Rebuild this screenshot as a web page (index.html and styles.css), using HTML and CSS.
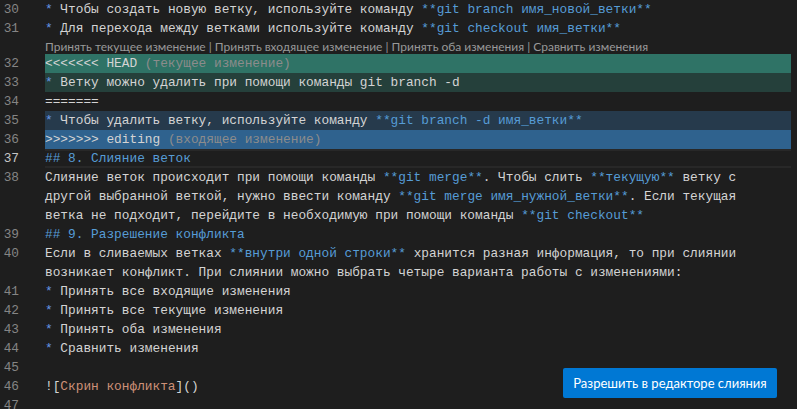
FILE: index.html
```html
<!DOCTYPE html>
<html lang="ru">
<head>
<meta charset="utf-8">
<title>merge conflict</title>
<link rel="stylesheet" href="styles.css">
</head>
<body>
<div class="editor">
  <div class="row"><span class="ln">30</span><span class="code"><span class="bul">*</span> Чтобы создать новую ветку, используйте команду <span class="md">**git branch имя_новой_ветки**</span></span></div>
  <div class="row"><span class="ln">31</span><span class="code"><span class="bul">*</span> Для перехода между ветками используйте команду <span class="md">**git checkout имя_ветки**</span></span></div>
  <div class="lens">Принять текущее изменение | Принять входящее изменение | Принять оба изменения | Сравнить изменения</div>
  <div class="row"><span class="ln">32</span><span class="code cur-head">&lt;&lt;&lt;&lt;&lt;&lt;&lt; HEAD<span class="hint"> (текущее изменение)</span></span></div>
  <div class="row"><span class="ln">33</span><span class="code cur-body"><span class="bul">*</span> Ветку можно удалить при помощи команды git branch -d</span></div>
  <div class="row"><span class="ln">34</span><span class="code">=======</span></div>
  <div class="row"><span class="ln">35</span><span class="code inc-body"><span class="bul">*</span> Чтобы удалить ветку, используйте команду <span class="md">**git branch -d имя_ветки**</span></span></div>
  <div class="row"><span class="ln">36</span><span class="code inc-head">&gt;&gt;&gt;&gt;&gt;&gt;&gt; editing<span class="hint"> (входящее изменение)</span></span></div>
  <div class="row active"><span class="ln">37</span><span class="code"><span class="hd">## 8. Слияние веток</span></span></div>
  <div class="row"><span class="ln">38</span><span class="code">Слияние веток происходит при помощи команды <span class="md">**git merge**</span>. Чтобы слить <span class="md">**текущую**</span> ветку с</span></div>
  <div class="row"><span class="ln"></span><span class="code">другой выбранной веткой, нужно ввести команду <span class="md">**git merge имя_нужной_ветки**</span>. Если текущая</span></div>
  <div class="row"><span class="ln"></span><span class="code">ветка не подходит, перейдите в необходимую при помощи команды <span class="md">**git checkout**</span></span></div>
  <div class="row"><span class="ln">39</span><span class="code"><span class="hd">## 9. Разрешение конфликта</span></span></div>
  <div class="row"><span class="ln">40</span><span class="code">Если в сливаемых ветках <span class="md">**внутри одной строки**</span> хранится разная информация, то при слиянии</span></div>
  <div class="row"><span class="ln"></span><span class="code">возникает конфликт. При слиянии можно выбрать четыре варианта работы с изменениями:</span></div>
  <div class="row"><span class="ln">41</span><span class="code"><span class="bul">*</span> Принять все входящие изменения</span></div>
  <div class="row"><span class="ln">42</span><span class="code"><span class="bul">*</span> Принять все текущие изменения</span></div>
  <div class="row"><span class="ln">43</span><span class="code"><span class="bul">*</span> Принять оба изменения</span></div>
  <div class="row"><span class="ln">44</span><span class="code"><span class="bul">*</span> Сравнить изменения</span></div>
  <div class="row"><span class="ln">45</span><span class="code"></span></div>
  <div class="row"><span class="ln">46</span><span class="code">![<span class="str">Скрин конфликта</span>]()</span></div>
  <div class="row"><span class="ln">47</span><span class="code"></span></div>
</div>
<button class="merge-btn" type="button">Разрешить в редакторе слияния</button>
</body>
</html>
```

FILE: styles.css
```css
html, body {
  margin: 0;
  padding: 0;
  background: #1e1e1e;
  width: 797px;
  height: 409px;
  overflow: hidden;
}

body {
  position: relative;
  font-family: "Liberation Mono", "DejaVu Sans Mono", monospace;
  font-size: 12.8px;
  color: #d4d4d4;
}

.editor {
  display: flex;
  flex-direction: column;
}

.row {
  display: flex;
  height: 19px;
  line-height: 19px;
}

.ln {
  flex: none;
  width: 19px;
  text-align: right;
  color: #858585;
}

.code {
  flex: none;
  margin-left: 26px;
  width: 746px;
  white-space: pre;
  box-sizing: border-box;
}

.active .ln {
  color: #c6c6c6;
}

.active .code {
  border-top: 2px solid #282828;
  border-bottom: 2px solid #282828;
  line-height: 15px;
}

.lens {
  height: 16px;
  line-height: 17px;
  margin-left: 45px;
  font-family: Lato, "Open Sans", sans-serif;
  font-size: 12px;
  color: #999999;
  white-space: pre;
}

.cur-head { background: #2f7366; }
.cur-body { background: #25403b; }
.inc-body { background: #263a4c; }
.inc-head { background: #2f628e; }

.hint { color: #8c8c8c; }
.bul { color: #6796e6; }
.md { color: #569cd6; }
.hd { color: #569cd6; }
.str { color: #ce9178; }

.merge-btn {
  position: absolute;
  left: 563px;
  top: 368px;
  width: 214px;
  height: 30px;
  padding: 0;
  border: none;
  border-radius: 2px;
  background: #0078d4;
  color: #ffffff;
  font-family: Lato, "Open Sans", sans-serif;
  font-size: 13px;
}
```
